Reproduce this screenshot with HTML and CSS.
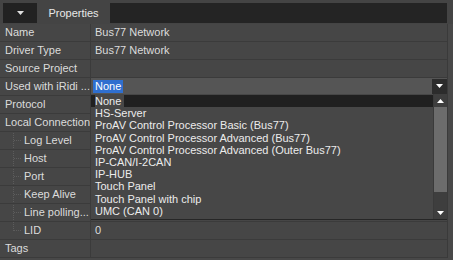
FILE: index.html
```html
<!DOCTYPE html>
<html>
<head>
<meta charset="utf-8">
<link rel="stylesheet" href="styles.css">
</head>
<body>
<div class="panel">
  <div class="header">
    <div class="menu-btn"><svg width="7" height="4" viewBox="0 0 7 4"><path d="M0 0H7L3.5 4Z" fill="#e0e0e0"/></svg></div>
    <div class="tab">Properties</div>
    <div class="filler"></div>
  </div>
  <div class="grid">
    <div class="row"><div class="label">Name</div><div class="value">Bus77 Network</div></div>
    <div class="row"><div class="label">Driver Type</div><div class="value">Bus77 Network</div></div>
    <div class="row"><div class="label">Source Project</div><div class="value"></div></div>
    <div class="row"><div class="label">Used with iRidi ...</div><div class="value combo"><span class="sel">None</span><div class="combo-btn"><svg width="7" height="4" viewBox="0 0 7 4"><path d="M0 0H7L3.5 4Z" fill="#fff"/></svg></div></div></div>
    <div class="row"><div class="label">Protocol</div><div class="value"></div></div>
    <div class="row"><div class="label">Local Connection</div><div class="value"></div></div>
    <div class="row child"><div class="label"><span class="tree"></span>Log Level</div><div class="value"></div></div>
    <div class="row child"><div class="label"><span class="tree"></span>Host</div><div class="value"></div></div>
    <div class="row child"><div class="label"><span class="tree"></span>Port</div><div class="value"></div></div>
    <div class="row child"><div class="label"><span class="tree"></span>Keep Alive</div><div class="value"></div></div>
    <div class="row child"><div class="label"><span class="tree"></span>Line polling...</div><div class="value"></div></div>
    <div class="row child last"><div class="label"><span class="tree"></span>LID</div><div class="value">0</div></div>
    <div class="row"><div class="label">Tags</div><div class="value"></div></div>
  </div>
  <div class="popup">
    <ul class="list">
      <li class="current"><span>None</span></li>
      <li>HS-Server</li>
      <li>ProAV Control Processor Basic (Bus77)</li>
      <li>ProAV Control Processor Advanced (Bus77)</li>
      <li>ProAV Control Processor Advanced (Outer Bus77)</li>
      <li>IP-CAN/I-2CAN</li>
      <li>IP-HUB</li>
      <li>Touch Panel</li>
      <li>Touch Panel with chip</li>
      <li>UMC (CAN 0)</li>
    </ul>
    <div class="scrollbar">
      <div class="sb-btn"><svg width="7" height="4" viewBox="0 0 7 4"><path d="M0 4H7L3.5 0Z" fill="#fff"/></svg></div>
      <div class="sb-thumb"></div>
      <div class="sb-track"></div>
      <div class="sb-btn"><svg width="7" height="4" viewBox="0 0 7 4"><path d="M0 0H7L3.5 4Z" fill="#fff"/></svg></div>
    </div>
  </div>
</div>
</body>
</html>
```
FILE: styles.css
```css
html, body {
  margin: 0;
  padding: 0;
  background: #464646;
}
body {
  font-family: "Liberation Sans", Arial, sans-serif;
  font-size: 11px;
  color: #dcdcdc;
}
.panel {
  position: relative;
  width: 453px;
  height: 260px;
  overflow: hidden;
  background: #484848;
}
.header {
  display: flex;
  height: 24px;
  box-sizing: border-box;
  padding: 3px 6px 1px 3px;
  background: #444444;
}
.menu-btn {
  width: 34px;
  background: #222222;
  display: flex;
  align-items: center;
  justify-content: center;
}
.tab {
  width: 73px;
  background: #444444;
  color: #e8e8e8;
  display: flex;
  align-items: center;
  justify-content: center;
}
.filler {
  flex: 1;
  background: #242424;
}
.grid {
  display: flex;
  flex-direction: column;
  width: 447px;
  border-right: 1px solid #3a3a3a;
}
.row {
  display: grid;
  grid-template-columns: 91px 1fr;
  height: 18px;
  box-sizing: border-box;
  border-bottom: 1px solid #3b3b3b;
  background: #464646;
}
.label {
  position: relative;
  padding-left: 5px;
  line-height: 17px;
  white-space: nowrap;
  overflow: hidden;
  border-right: 1px solid #3b3b3b;
}
.child .label {
  padding-left: 24px;
}
.tree {
  position: absolute;
  left: 13px;
  top: -1px;
  height: 19px;
  width: 7px;
  border-left: 1px dotted #5c5c5c;
}
.tree::after {
  content: "";
  position: absolute;
  left: 0;
  top: 9px;
  width: 7px;
  border-top: 1px dotted #5c5c5c;
}
.last .tree {
  height: 10px;
}
.value {
  padding-left: 4px;
  line-height: 17px;
  white-space: nowrap;
  overflow: hidden;
}
.combo {
  display: flex;
  align-items: center;
  justify-content: space-between;
  background: #555555;
  padding-left: 2px;
  padding-right: 0;
}
.sel {
  background: #2f6fcf;
  color: #ffffff;
  line-height: 13px;
  padding: 0 2px;
}
.combo-btn {
  width: 15px;
  height: 15px;
  margin-bottom: 1px;
  background: #2c2c2c;
  display: flex;
  align-items: center;
  justify-content: center;
}
.popup {
  position: absolute;
  left: 91px;
  top: 94px;
  width: 356px;
  height: 125px;
  display: flex;
  background: #474747;
  box-shadow: 0 1px 0 #262626;
}
.list {
  flex: 1;
  margin: 0;
  padding: 1px 0 0 0;
  list-style: none;
  color: #ececec;
}
.list li {
  height: 12.2px;
  line-height: 12px;
  padding-left: 4px;
  white-space: nowrap;
}
.list li.current {
  background: #202020;
  margin-right: 0;
}
.list li.current span {
  background: #474747;
  padding-right: 3px;
}
.scrollbar {
  width: 13px;
  display: flex;
  flex-direction: column;
  background: #3e3e3e;
  border-left: 1px solid #3a3a3a;
}
.sb-btn {
  height: 13px;
  display: flex;
  align-items: center;
  justify-content: center;
  background: #3e3e3e;
}
.sb-thumb {
  height: 85px;
  background: #6c6c6c;
}
.sb-track {
  flex: 1;
}
```
